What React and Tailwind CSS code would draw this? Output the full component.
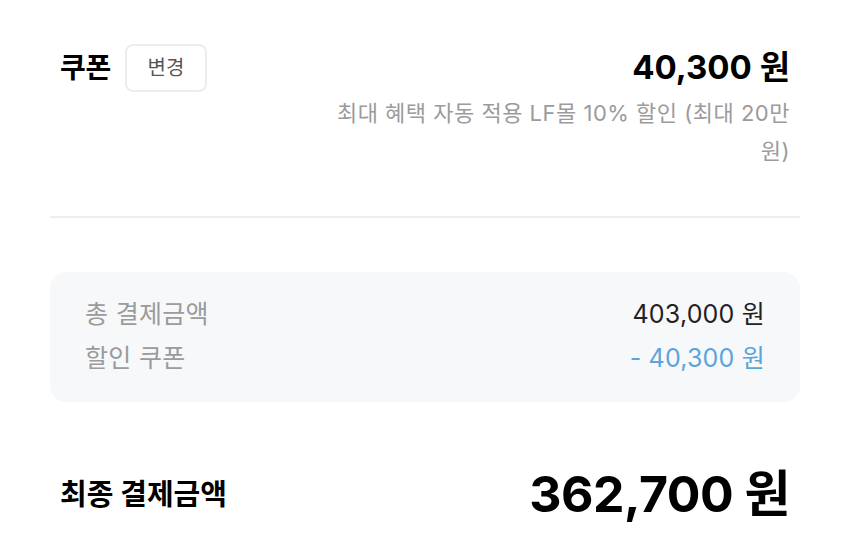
const font = "font-['Inter','Noto_Sans_CJK_KR',sans-serif]";

const CouponRow = () => (
  <section className="px-[10px] pt-[44px]">
    <div className="flex items-start justify-between">
      <div className="flex items-center gap-[14px] h-[48px]">
        <h2 className="text-[28px] font-bold text-black tracking-[-0.3px]">쿠폰</h2>
        <button className="w-[82px] h-[48px] rounded-[8px] border-2 border-[#ececec] bg-white text-[20px] text-[#555]">
          변경
        </button>
      </div>
      <div className="flex flex-col items-end">
        <div className="h-[48px] flex items-center text-[33px] font-bold text-black">
          40,300 원
        </div>
        <p className="mt-[2px] w-[462px] text-right text-[22px] leading-[38px] text-[#9b9b9b] tracking-[0.5px]">
          최대 혜택 자동 적용 LF몰 10% 할인 (최대 20만 원)
        </p>
      </div>
    </div>
  </section>
);

const SummaryBox = () => (
  <div className="mt-[54px] rounded-[16px] bg-[#f7f8fa] px-[35px] py-[21px]">
    <div className="flex items-center justify-between h-[44px] text-[25px]">
      <span className="text-[#9b9b9b] tracking-[0.3px]">총 결제금액</span>
      <span className="text-[#222] tracking-[0.2px]">403,000 원</span>
    </div>
    <div className="flex items-center justify-between h-[44px] text-[25px]">
      <span className="text-[#9b9b9b] tracking-[0.3px]">할인 쿠폰</span>
      <span className="text-[#5ba4dc] tracking-[0.2px]">- 40,300 원</span>
    </div>
  </div>
);

export default function App() {
  return (
    <div className={`w-[850px] h-[546px] bg-white overflow-hidden px-[50px] ${font}`}>
      <CouponRow />
      <div className="mt-[46px] h-[2px] bg-[#eeeeee]" />
      <SummaryBox />
      {/* final amount */}
      <div className="mt-[55px] px-[10px] flex items-center justify-between">
        <span className="text-[29px] font-bold text-black">최종 결제금액</span>
        <span className="text-[50px] font-bold text-black tracking-[-0.5px]">362,700 원</span>
      </div>
    </div>
  );
}
